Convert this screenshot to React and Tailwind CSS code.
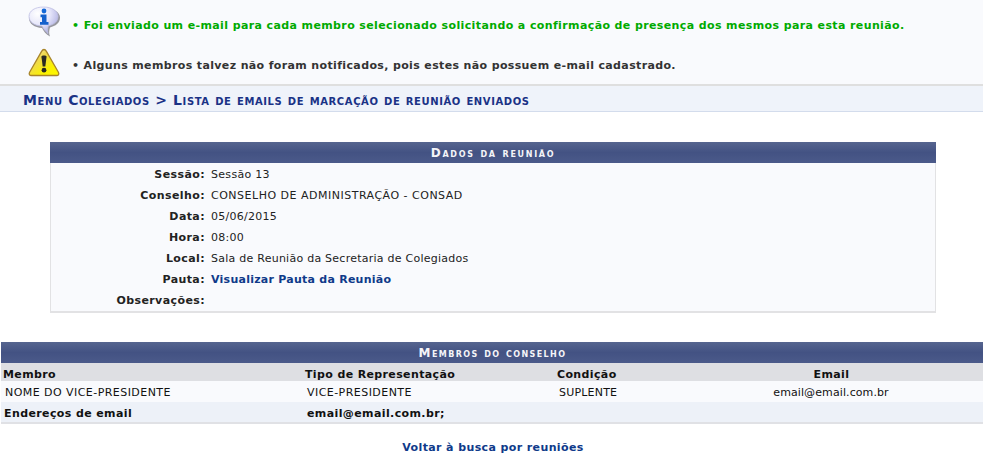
const FONT = "font-['DejaVu_Sans','Liberation_Sans',sans-serif]";

function InfoIcon() {
  return (
    <svg width="34" height="32" viewBox="0 0 34 32" className="shrink-0 -ml-px">
      <defs>
        <radialGradient id="b" cx="0.3" cy="0.25" r="0.85">
          <stop offset="0" stopColor="#ffffff" />
          <stop offset="0.5" stopColor="#e6e6fa" />
          <stop offset="1" stopColor="#a8a8e0" />
        </radialGradient>
      </defs>
      <path d="M17 2C8 2 2 6 2 12C2 18 7.5 21.5 15 22C16.5 25 19 28.5 23 30.5C21.8 27.5 22 24.5 23 21.5C28.5 20 33 17 33 11.5C33 6 26 2 17 2Z" fill="#97979f" />
      <path d="M16.5 1C8 1 2 4.8 2 10.5C2 16 7.5 19.8 15 20C16.5 22.5 18.5 25.5 21 27.5C20.3 25 20.5 22.5 21.3 19.8C27 18.6 31 15.5 31 10.3C31 5 25 1 16.5 1Z" fill="url(#b)" stroke="#c0c0e4" strokeWidth="0.8" />
      <circle cx="17" cy="5" r="2.4" fill="#1468d8" />
      <path d="M13.5 8.5H19.5V16H21.5V18.8H13V16H15V11.2H13.5Z" fill="#1460cc" />
    </svg>
  );
}

function WarnIcon() {
  return (
    <svg width="32" height="29" viewBox="0 0 32 29" className="shrink-0">
      <defs>
        <linearGradient id="w" x1="0" y1="0" x2="1" y2="1">
          <stop offset="0" stopColor="#fbf3b0" />
          <stop offset="0.35" stopColor="#efd850" />
          <stop offset="0.7" stopColor="#fbf200" />
          <stop offset="1" stopColor="#fff700" />
        </linearGradient>
      </defs>
      <path d="M16 1.5C14.8 1.5 14.2 2.3 13.6 3.4L1.6 24.3C0.6 26.2 1.6 27.5 3.4 27.5H28.6C30.4 27.5 31.4 26.2 30.4 24.3L18.4 3.4C17.8 2.3 17.2 1.5 16 1.5Z" fill="url(#w)" stroke="#a8842a" strokeWidth="1.3" />
      <path d="M13.4 8.6C13.4 7 18.6 7 18.6 8.6L17.3 18.6H14.7Z" fill="#2a2a22" />
      <circle cx="16" cy="22.2" r="2.4" fill="#2a2a22" />
    </svg>
  );
}

function Row({ label, children }) {
  return (
    <div className="flex h-[21px] shrink-0 items-center pt-[2px]">
      <div className="w-[154px] shrink-0 text-right font-bold tracking-[0.4px] text-[#222]">{label}</div>
      <div className="pl-[6px] text-[#222]">{children}</div>
    </div>
  );
}

export default function App() {
  return (
    <div className={`${FONT} min-h-[467px] bg-white text-[11px] text-[#222]`}>
      <div className="flex h-[86px] flex-col border-b-2 border-[#dfdfdf] bg-[#f9fafd] pl-[28px]">
        <div className="flex h-[43px] items-center gap-[12px]">
          <InfoIcon />
          <span className="-ml-px pt-[10px] font-bold tracking-[0.385px] text-[#00aa00]">• Foi enviado um e-mail para cada membro selecionado solicitando a confirmação de presença dos mesmos para esta reunião.</span>
        </div>
        <div className="flex h-[39px] items-center gap-[12px]">
          <WarnIcon />
          <span className="pt-[8px] font-bold tracking-[0.36px] text-[#333]">• Alguns membros talvez não foram notificados, pois estes não possuem e-mail cadastrado.</span>
        </div>
      </div>

      <div className="flex h-[26px] items-center border-b border-[#d3dcec] bg-[#eff3fa] pl-[23px] pt-[4px] text-[14px] font-bold tracking-[0.6px] text-[#1a3286] [font-variant:small-caps]">
        Menu Colegiados &gt; Lista de emails de marcação de reunião enviados
      </div>

      <div className="ml-[50px] mt-[30px] w-[886px]">
        <div className="flex h-[21px] items-center justify-center bg-[linear-gradient(#56658f_0%,#435283_50%,#4b5a8a_100%)] text-[12px] font-bold tracking-[1.7px] text-[#f4f4f8] [font-variant:small-caps]">
          Dados da reunião
        </div>
        <div className="flex h-[150px] flex-col border-x border-b-2 border-[#e2e2e4] bg-[#f9fafd] pt-[1px]">
          <Row label="Sessão:"><span className="tracking-[0.3px]">Sessão 13</span></Row>
          <Row label="Conselho:"><span className="tracking-[0.5px]">CONSELHO DE ADMINISTRAÇÃO - CONSAD</span></Row>
          <Row label="Data:"><span className="tracking-[0.25px]">05/06/2015</span></Row>
          <Row label="Hora:"><span className="tracking-[0.25px]">08:00</span></Row>
          <Row label="Local:"><span className="tracking-[0.25px]">Sala de Reunião da Secretaria de Colegiados</span></Row>
          <Row label="Pauta:"><span className="font-bold tracking-[0.25px] text-[#0f3a8a]">Visualizar Pauta da Reunião</span></Row>
          <Row label="Observações:" />
        </div>
      </div>

      <div className="ml-px mt-[29px]">
        <div className="flex h-[21px] items-center justify-center bg-[linear-gradient(#56658f_0%,#435283_50%,#4b5a8a_100%)] pl-[1px] text-[12px] font-bold tracking-[1.4px] text-[#f4f4f8] [font-variant:small-caps]">
          Membros do conselho
        </div>
        <div className="grid h-[18px] grid-cols-[302px_252px_125px_1fr] items-center bg-[#dedfe3] pt-[4px] font-bold tracking-[0.37px] text-[#111]">
          <div className="pl-[2px]">Membro</div>
          <div className="pl-[2px]">Tipo de Representação</div>
          <div className="pl-[2px]">Condição</div>
          <div className="text-center">Email</div>
        </div>
        <div className="grid h-[21px] grid-cols-[302px_252px_125px_1fr] items-center bg-[#f9fafd] pt-[4px] text-[#111]">
          <div className="pl-[4px] tracking-[0.45px]">NOME DO VICE-PRESIDENTE</div>
          <div className="pl-[4px] tracking-[0.45px]">VICE-PRESIDENTE</div>
          <div className="pl-[4px] tracking-[0.2px]">SUPLENTE</div>
          <div className="pr-[1px] text-center tracking-[0.1px]">email@email.com.br</div>
        </div>
        <div className="grid h-[22px] grid-cols-[302px_1fr] items-center border-b-2 border-[#e0e1e5] bg-[#edf1f8] pt-[4px] font-bold tracking-[0.39px] text-[#111]">
          <div className="pl-[3px]">Endereços de email</div>
          <div className="pl-[4px]">email@email.com.br;</div>
        </div>
      </div>

      <div className="mt-[16px] pl-[3px] text-center font-bold tracking-[0.39px] text-[#0f3a8a]">Voltar à busca por reuniões</div>
    </div>
  );
}
